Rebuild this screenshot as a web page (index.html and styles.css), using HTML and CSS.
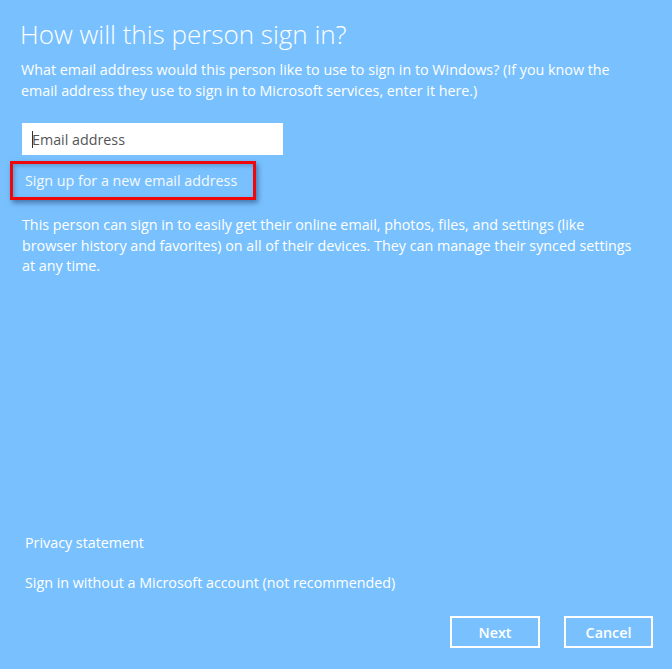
FILE: index.html
```html
<!DOCTYPE html>
<html lang="en">
<head>
<meta charset="utf-8">
<title>How will this person sign in?</title>
<link rel="stylesheet" href="styles.css">
</head>
<body>
<main class="page">
  <h1 class="title">How will this person sign in?</h1>
  <p class="intro">What email address would this person like to use to sign in to Windows? (If you know the<br>email address they use to sign in to Microsoft services, enter it here.)</p>
  <div class="field"><span class="caret"></span><span class="placeholder">Email address</span></div>
  <a class="signup" href="#">Sign up for a new email address</a>
  <p class="info">This person can sign in to easily get their online email, photos, files, and settings (like<br>browser history and favorites) on all of their devices. They can manage their synced settings<br>at any time.</p>
  <footer class="footer">
    <a class="link" href="#">Privacy statement</a>
    <a class="link link-second" href="#">Sign in without a Microsoft account (not recommended)</a>
    <div class="buttons">
      <button class="btn btn-next">Next</button>
      <button class="btn btn-cancel">Cancel</button>
    </div>
  </footer>
</main>
</body>
</html>
```
FILE: styles.css
```css
html, body {
  margin: 0;
  padding: 0;
}
body {
  background: #79c1fe;
  font-family: "Open Sans", "Noto Sans", sans-serif;
  color: #ffffff;
}
.page {
  box-sizing: border-box;
  height: 669px;
  display: flex;
  flex-direction: column;
  padding: 0 19px 21px 22px;
}
.title {
  margin: 17px 0 0 -2px;
  font-weight: 300;
  font-size: 26px;
  line-height: 34px;
  letter-spacing: 0;
}
.intro {
  margin: 8px 0 0 -1px;
  font-size: 14.3px;
  line-height: 21px;
}
.field {
  margin-top: 22px;
  width: 261px;
  height: 32px;
  background: #ffffff;
  display: flex;
  align-items: center;
  box-sizing: border-box;
  padding-left: 10px;
}
.caret {
  width: 1px;
  height: 17px;
  background: #333;
  margin-right: -1px;
}
.placeholder {
  color: #555;
  font-size: 14.3px;
}
.signup {
  margin: 6px 0 0 -12px;
  align-self: flex-start;
  box-sizing: border-box;
  width: 246px;
  height: 39px;
  border: 3px solid #f00808;
  padding-left: 12px;
  display: flex;
  align-items: center;
  color: #f4f9ff;
  text-decoration: none;
  font-size: 14.3px;
  box-shadow: 2px 3px 5px rgba(30, 60, 110, 0.55), inset 2px 2px 4px rgba(30, 60, 110, 0.3);
}
.info {
  margin: 15px 0 0 0;
  font-size: 14.3px;
  line-height: 20.5px;
}
.footer {
  margin-top: auto;
  display: flex;
  flex-direction: column;
  align-items: flex-start;
}
.link {
  color: #ffffff;
  text-decoration: none;
  font-size: 14.3px;
  line-height: 20px;
  margin-left: 3px;
}
.link-second {
  margin-top: 20px;
}
.buttons {
  margin-top: 23px;
  align-self: flex-end;
  display: flex;
  gap: 24px;
}
.btn {
  box-sizing: border-box;
  height: 32px;
  background: transparent;
  border: 2px solid #ffffff;
  color: #ffffff;
  font-family: "Open Sans", "Noto Sans", sans-serif;
  font-weight: 600;
  font-size: 14.3px;
  padding: 0;
}
.btn-next { width: 90px; }
.btn-cancel { width: 89px; }
```
